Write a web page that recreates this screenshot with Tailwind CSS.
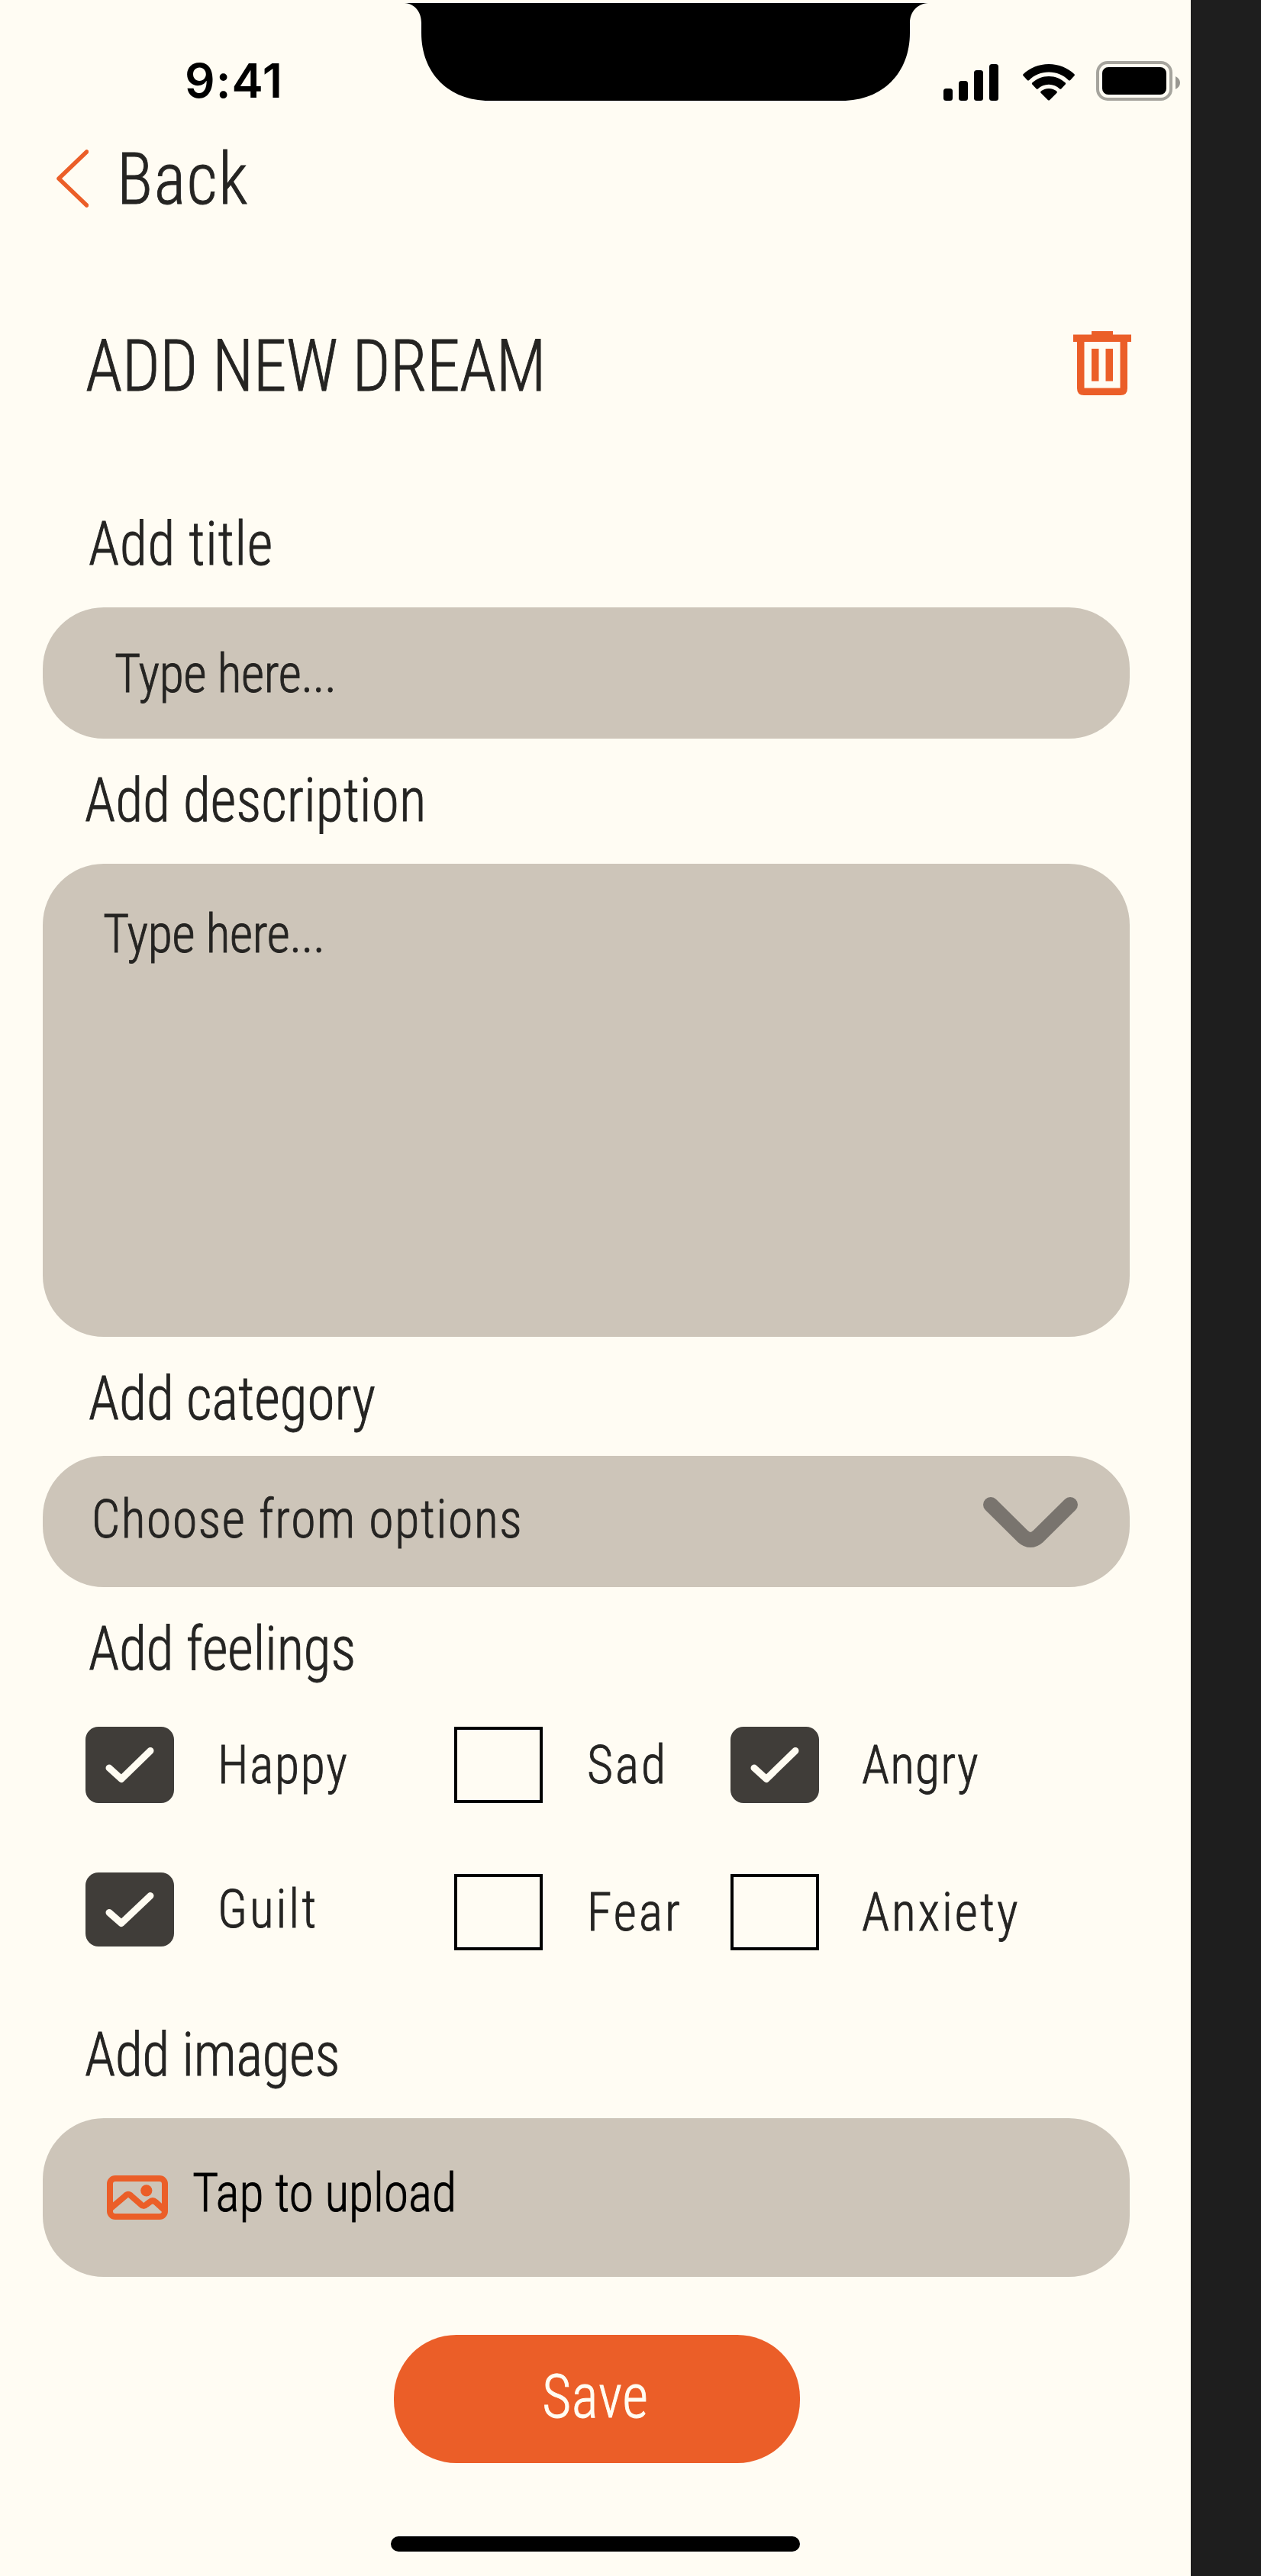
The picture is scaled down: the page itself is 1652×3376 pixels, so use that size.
<!DOCTYPE html>
<html lang="en">
<head>
<meta charset="utf-8">
<title>Add new dream</title>
<script src="https://cdn.jsdelivr.net/npm/@tailwindcss/browser@4"></script>
</head>
<body class="flex bg-[#1e1e1e] font-['Roboto_Condensed',Roboto,sans-serif] font-light text-[#252422] [-webkit-text-stroke:0.9px]">
<main class="relative flex h-[3376px] w-[1560px] flex-col bg-[#fffcf3]">

  <!-- Status bar -->
  <header class="flex h-[160px] items-start justify-between">
    <time class="ml-[242px] mt-[68px] font-['Inter',sans-serif] text-[62px] font-semibold leading-[75px] tracking-[1px] text-black [-webkit-text-stroke:0]">9:41</time>
    <svg class="absolute left-[530px] top-1 h-[128px] w-[686px]" viewBox="0 0 686 128" fill="#000"><path d="M0 0C14 1 22 12 22 26V39C22 92 58 128 111 128H573C626 128 662 92 662 39V26C662 12 671 1 686 0Z"/></svg>
    <div class="mr-[14px] mt-20 flex items-start">
      <svg class="h-[52px] w-[72px]" viewBox="0 0 72 52" fill="#000">
        <rect x="0" y="36" width="12" height="16" rx="3.5"/><rect x="20" y="26" width="12" height="26" rx="3.5"/><rect x="40" y="12" width="12" height="40" rx="3.5"/><rect x="60" y="4" width="12" height="48" rx="3.5"/>
      </svg>
      <svg class="ml-8 h-[52px] w-[68px]" viewBox="0 0 68 52" fill="#000">
        <path d="M34 4C47 4 59 9 67.5 17.300Q68.300 18.300 67.500 19.300L62 25.200Q61 26 60 25.200C53 18.300 44 14.500 34 14.500S15 18.300 8 25.200Q7 26 6 25.200L.5 19.300Q-.3 18.300 .5 17.300C9 9 21 4 34 4Z"/>
        <path d="M34 20C42.500 20 50 23.200 55.800 28.600Q56.600 29.600 55.800 30.600L50.200 36.500Q49.300 37.200 48.300 36.500C44.500 32.800 39.500 30.700 34 30.700S23.500 32.800 19.700 36.500Q18.700 37.200 17.800 36.500L12.200 30.600Q11.400 29.600 12.200 28.600C18 23.200 25.500 20 34 20Z"/>
        <path d="M34 36C38 36 41.700 37.400 44.500 39.800Q45.300 40.800 44.500 41.800L35 51.200Q34 52 33 51.200L23.500 41.800Q22.700 40.800 23.500 39.800C26.300 37.400 30 36 34 36Z"/>
      </svg>
      <svg class="ml-7 h-[52px] w-[110px]" viewBox="0 0 110 52">
        <rect x="2" y="2" width="96" height="48" rx="13" fill="none" stroke="#a6a49d" stroke-width="4"/>
        <rect x="8" y="8" width="84" height="36" rx="8" fill="#000"/>
        <path d="M104 20C108 22 110 25 110 28.500S108 35 104 37Z" fill="#999791"/>
      </svg>
    </div>
  </header>

  <nav class="flex h-[150px] items-center pl-[74px]">
    <svg class="mb-0.5 h-[76px] w-[42px]" viewBox="0 0 42 76" fill="none" stroke="#eb5e28" stroke-width="5.500" stroke-linecap="round" stroke-linejoin="round"><path d="M39.500 3L3 38L39.500 73"/></svg>
    <a class="ml-[37px] origin-left scale-x-[.93] whitespace-nowrap text-[94.600px] leading-none tracking-[1.700px]">Back</a>
  </nav>

  <div class="flex h-[340px] items-center justify-between pl-[112px] pr-[78px]">
    <h1 class="origin-left scale-x-[.93] whitespace-nowrap text-[94.600px] leading-none tracking-[-.6px]">ADD NEW DREAM</h1>
    <svg class="mb-2 h-[84px] w-[76px]" viewBox="0 0 76 84" fill="#eb5e28">
      <path d="M24 0H52V4.500H76V14H71V75Q71 84 62 84H14Q5 84 5 75V14H0V4.500H24ZM14.500 14V74.500H61.500V14Z" fill-rule="evenodd"/>
      <path d="M24 23H33.500V65.500H24ZM42.500 23H52V65.500H42.500Z"/>
    </svg>
  </div>

  <label class="mb-5 flex h-[126px] items-center pl-[115.500px]"><span class="origin-left scale-x-[.93] whitespace-nowrap text-[78.800px] leading-none tracking-[.8px]">Add title</span></label>
  <div class="ml-14 flex h-[172px] w-[1424px] items-center rounded-[80px] bg-[#cdc5b9] pl-[93.500px] pt-[3px]"><span class="origin-left scale-x-[.93] whitespace-nowrap text-[70.800px] leading-none tracking-[-.4px]">Type here...</span></div>

  <label class="flex h-[164px] items-center pb-0.5 pl-[111px]"><span class="origin-left scale-x-[.93] whitespace-nowrap text-[78.800px] leading-none tracking-[.18px]">Add description</span></label>
  <div class="ml-14 flex h-[620px] w-[1424px] items-start rounded-[80px] bg-[#cdc5b9] pl-[79px] pt-[50px]"><span class="origin-left scale-x-[.93] whitespace-nowrap text-[70.800px] leading-[84px] tracking-[-.4px]">Type here...</span></div>

  <label class="flex h-[156px] items-center pl-[115.500px] pt-1.5"><span class="origin-left scale-x-[.93] whitespace-nowrap text-[78.800px] leading-none">Add category</span></label>
  <div class="ml-14 flex h-[172px] w-[1424px] items-center justify-between rounded-[80px] bg-[#cdc5b9] pl-16 pr-[68px]">
    <span class="mb-[5px] origin-left scale-x-[.93] whitespace-nowrap text-[70.800px] leading-none tracking-[1.700px]">Choose from options</span>
    <svg class="mt-0.5 h-[66px] w-[124px]" viewBox="0 0 124 66" fill="none" stroke="#79746e" stroke-width="20" stroke-linecap="round"><path d="M10 10L52 51.500Q62 60.500 72 51.500L114 10"/></svg>
  </div>

  <h2 class="mb-[21px] flex h-[162px] items-center pl-[115.500px]"><span class="origin-left scale-x-[.93] whitespace-nowrap text-[78.800px] leading-none tracking-[-.1px]">Add feelings</span></h2>
  <div class="ml-[112px] grid grid-cols-[482.500px_362.500px_1fr] gap-y-[93px] text-[70.800px] leading-none">
    <label class="flex h-[100px] items-center gap-[57px]">
      <svg class="h-[100px] w-[116px] rounded-[17px] bg-[#403d39]" viewBox="0 0 116 100" fill="none" stroke="#fffcf2" stroke-width="9" stroke-linecap="round" stroke-linejoin="round"><path d="M31 54L47 68.500L85 31.500"/></svg>
      <span class="origin-left scale-x-[.93] tracking-[1.900px]">Happy</span>
    </label>
    <label class="flex h-[100px] items-center gap-[58px]">
      <span class="h-[100px] w-[116px] border-4 border-black"></span>
      <span class="origin-left scale-x-[.93] tracking-[3.200px]">Sad</span>
    </label>
    <label class="flex h-[100px] items-center gap-14">
      <svg class="h-[100px] w-[116px] rounded-[17px] bg-[#403d39]" viewBox="0 0 116 100" fill="none" stroke="#fffcf2" stroke-width="9" stroke-linecap="round" stroke-linejoin="round"><path d="M31 54L47 68.500L85 31.500"/></svg>
      <span class="origin-left scale-x-[.93] tracking-[1.200px]">Angry</span>
    </label>
    <label class="-mt-0.5 flex h-[97px] items-center gap-[57px]">
      <svg class="h-[97px] w-[116px] rounded-[17px] bg-[#403d39]" viewBox="0 0 116 97" fill="none" stroke="#fffcf2" stroke-width="9" stroke-linecap="round" stroke-linejoin="round"><path d="M31 52.500L47 66.500L85 30.500"/></svg>
      <span class="origin-left scale-x-[.93] tracking-[3.100px]">Guilt</span>
    </label>
    <label class="flex h-[100px] items-center gap-[58px]">
      <span class="h-[100px] w-[116px] border-4 border-black"></span>
      <span class="origin-left scale-x-[.93] tracking-[3.300px]">Fear</span>
    </label>
    <label class="flex h-[100px] items-center gap-14">
      <span class="h-[100px] w-[116px] border-4 border-black"></span>
      <span class="origin-left scale-x-[.93] tracking-[3.150px]">Anxiety</span>
    </label>
  </div>

  <h2 class="flex h-[220px] items-center pl-[111px] pt-[54px]"><span class="origin-left scale-x-[.93] whitespace-nowrap text-[78.800px] leading-none tracking-[-.2px]">Add images</span></h2>
  <div class="ml-14 flex h-[208px] w-[1424px] items-center rounded-[80px] bg-[#cdc5b9] pl-[84px]">
    <svg class="h-[58px] w-20" viewBox="0 0 80 58" fill="none" stroke="#eb5e28" stroke-width="8" stroke-linejoin="round">
      <rect x="4" y="4" width="72" height="50" rx="7"/>
      <path d="M4 44L24 27Q28 22.500 32 27L44 37.500Q48 42 52 38L56 35Q60 31.500 64 35L76 46"/>
      <circle cx="51.800" cy="19.800" r="7.600" fill="#eb5e28" stroke="none"/>
    </svg>
    <span class="mb-3 ml-[31.500px] origin-left scale-x-[.93] whitespace-nowrap text-[70.800px] leading-none tracking-[-.1px] text-black">Tap to upload</span>
  </div>

  <button class="ml-[516px] mt-[76px] flex h-[168px] w-[532px] shrink-0 items-center justify-center rounded-[82px] bg-[#eb5e28] pb-1.5 pr-1 text-[#fffcf2]"><span class="scale-x-[.93] text-[78.800px] leading-none tracking-[1px]">Save</span></button>
  <div class="ml-[512px] mt-24 h-5 w-[536px] rounded-full bg-black"></div>
</main>
</body>
</html>
